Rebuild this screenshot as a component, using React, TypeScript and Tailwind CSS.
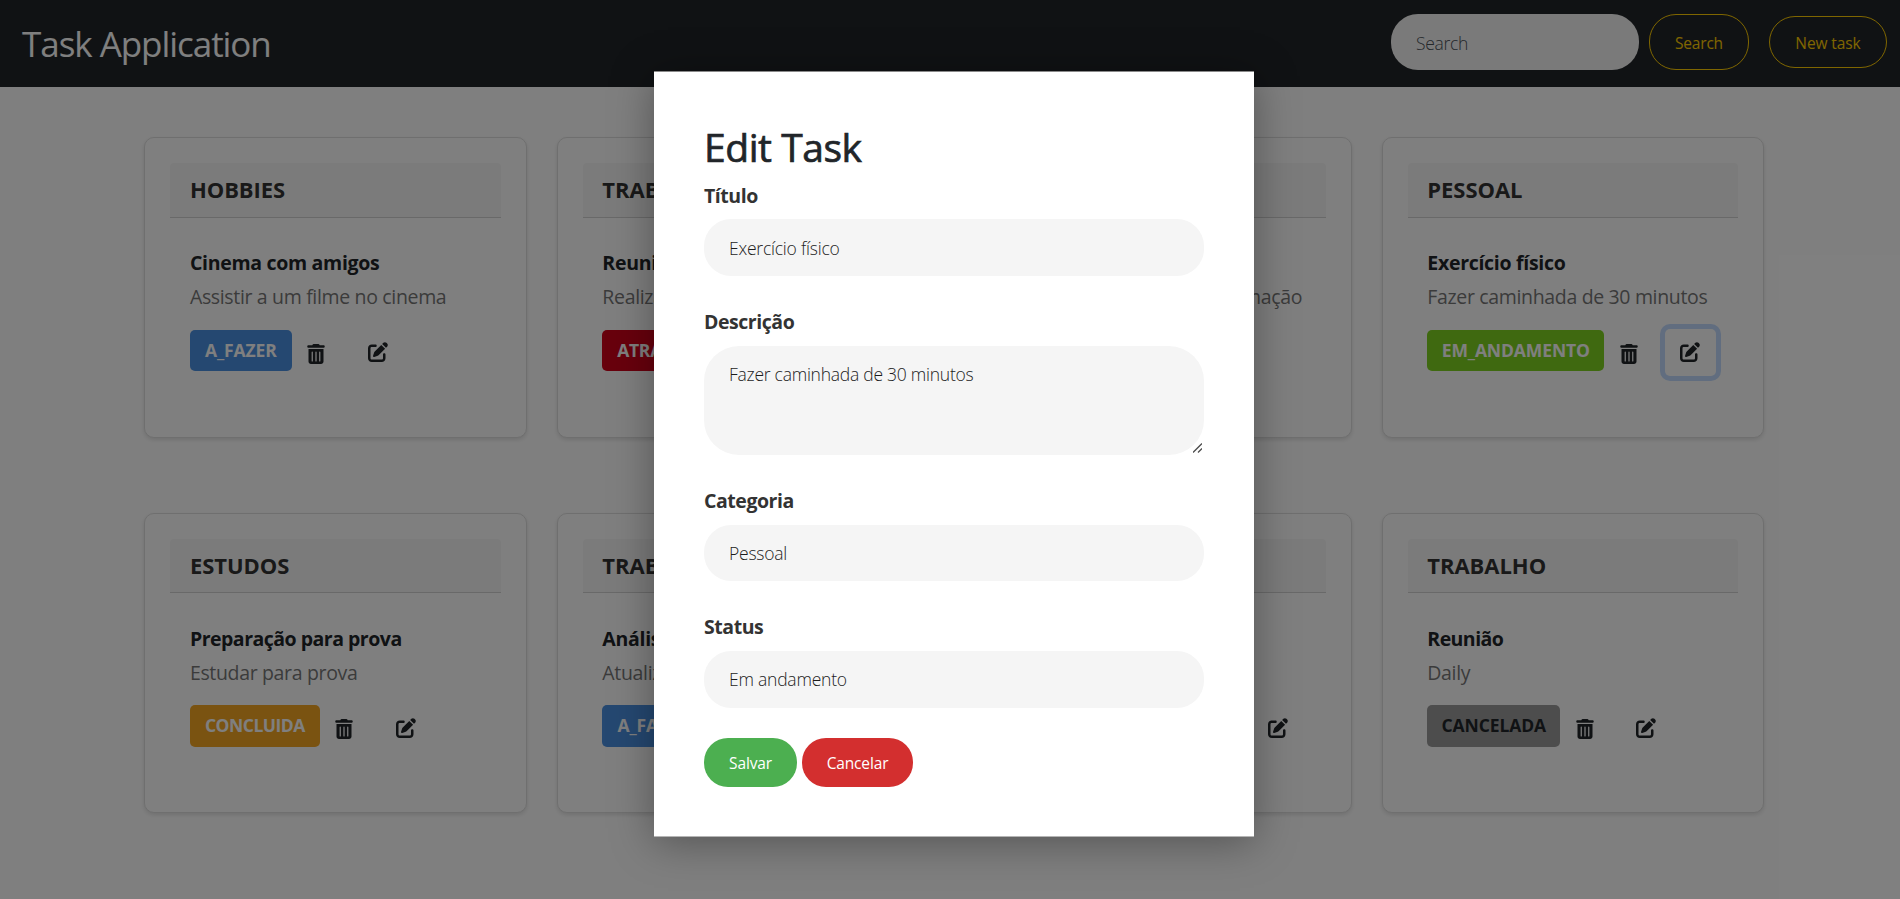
import { FaTrashCan, FaPenToSquare } from "react-icons/fa6";

type Status = "A_FAZER" | "ATRASADA" | "CONCLUIDA" | "EM_ANDAMENTO" | "CANCELADA";

type Task = {
  category: string;
  title: string;
  titleSpacing?: string;
  description: string;
  status: Status;
  focused?: boolean;
};

const badges: Record<Status, string> = {
  A_FAZER: "w-[102px] tracking-[-0.1px] bg-[#4a90e2] text-white",
  ATRASADA: "w-[120px] tracking-[-0.3px] bg-[#d0021b] text-white",
  CONCLUIDA: "w-[130px] tracking-[-0.5px] bg-[#f5a623] text-white",
  EM_ANDAMENTO: "w-[177px] tracking-[-0.1px] bg-[#7ed321] text-white",
  CANCELADA: "w-[133px] tracking-[-0.1px] bg-[#9b9b9b] text-[#212529]",
};

const tasks: Task[] = [
  { category: "HOBBIES", title: "Cinema com amigos", description: "Assistir a um filme no cinema", status: "A_FAZER" },
  { category: "TRABALHO", title: "Reunião de equipe", description: "Realizar reunião semanal", status: "ATRASADA" },
  { category: "ESTUDOS", title: "Curso online", description: "Estudar a lógica de programação", status: "CONCLUIDA" },
  { category: "PESSOAL", title: "Exercício físico", description: "Fazer caminhada de 30 minutos", status: "EM_ANDAMENTO", focused: true },
  { category: "ESTUDOS", title: "Preparação para prova", titleSpacing: "tracking-[-0.5px]", description: "Estudar para prova", status: "CONCLUIDA" },
  { category: "TRABALHO", title: "Análise de dados", description: "Atualizar relatório", status: "A_FAZER" },
  { category: "PESSOAL", title: "Compras", description: "Ir ao mercado", status: "EM_ANDAMENTO" },
  { category: "TRABALHO", title: "Reunião", titleSpacing: "tracking-[-0.55px]", description: "Daily", status: "CANCELADA" },
];

function TaskCard({ task }: { task: Task }) {
  return (
    <article className="h-[300.3px] rounded-[10px] border border-[#dfdfdf] bg-white p-[25px] shadow-[0_2px_4px_rgba(0,0,0,0.12)]">
      <h2 className="h-[54.6px] rounded-t-[4px] border-b border-[#d3d3d3] bg-[#f7f7f7] px-[19.5px] text-[22px] leading-[53px] font-bold tracking-[-0.05px] text-[#333]">
        {task.category}
      </h2>
      <div className="px-[19.5px] pt-[28.4px]">
        <h3 className={`text-[19.5px] leading-[34px] font-bold text-[#212529] ${task.titleSpacing ?? "tracking-[-0.3px]"}`}>{task.title}</h3>
        <p className="text-[19.5px] leading-[34px] tracking-[-0.34px] whitespace-nowrap text-[#777]">{task.description}</p>
        <div className="flex items-center pt-[15.4px]">
          <span className={`rounded-[5px] text-center text-[17.5px] leading-[41.6px] font-bold ${badges[task.status]}`}>{task.status}</span>
          <button className="ml-[14.5px] pt-[6px] text-[#212529]">
            <FaTrashCan size={20} />
          </button>
          <button
            className={`-mb-1 -mt-px ml-[26px] flex h-[47px] w-[51px] items-center justify-center rounded-[5px] text-[#212529] ${task.focused ? "shadow-[0_0_0_5px_#c2dbfe]" : ""}`}
          >
            <FaPenToSquare size={20} />
          </button>
        </div>
      </div>
    </article>
  );
}

function Label({ text }: { text: string }) {
  return <span className="block h-[39.6px] text-[19.5px] leading-[32px] font-bold tracking-[-0.45px] text-[#333]">{text}</span>;
}

function Field({ label, value }: { label: string; value: string }) {
  return (
    <label className="mb-[30px] block">
      <Label text={label} />
      <input
        className="block h-[56.6px] w-full rounded-[27px] bg-[#f5f5f5] px-[25px] text-[17.5px] font-light tracking-[-0.22px] text-[#1c1c1c]"
        defaultValue={value}
      />
    </label>
  );
}

export default function App() {
  return (
    <div className="relative h-[899px] overflow-hidden bg-white font-['Open_Sans','Noto_Sans',sans-serif]">
      <nav className="flex h-[87px] items-center bg-[#212529] pr-[13px] pb-[3px] pl-[22px]">
        <span className="mr-auto pt-[4px] text-[35px] tracking-[-1.05px] text-white">Task Application</span>
        <form className="flex h-14 items-stretch gap-[10px]">
          <input
            className="w-[248px] rounded-[27px] bg-[#f5f5f5] px-[25px] pt-[2px] text-[17.5px] font-light tracking-[-0.3px] placeholder:text-[#495057]"
            placeholder="Search"
          />
          <button type="button" className="w-[100px] rounded-[27px] border border-[#ffcc00] pt-[4px] text-[15.5px] tracking-[-0.2px] text-[#ffcc00]">
            Search
          </button>
        </form>
        <button className="ml-5 h-[52px] w-[118px] rounded-[26px] border border-[#ffcc00] pt-[4px] text-[15.5px] tracking-[-0.1px] text-[#ffcc00]">New task</button>
      </nav>
      <main className="grid grid-cols-4 gap-x-[30.3px] gap-y-[75.3px] pt-[50.3px] pr-[136px] pl-[144.4px]">
        {tasks.map((task, i) => (
          <TaskCard key={i} task={task} />
        ))}
      </main>
      <div className="absolute inset-0 flex items-start bg-black/50 pt-[71px] pl-[654px]">
        <div
          role="dialog"
          className="h-[766px] w-[600px] border-t border-b border-t-[#8a8a8a] border-b-[#b5b5b5] bg-white px-[50px] pt-[49.6px] shadow-[0_5px_40px_rgba(0,0,0,0.35)]"
        >
          <h1 className="h-[58.3px] text-[39px] leading-[50px] font-normal tracking-[-0.45px] text-[#212529] [-webkit-text-stroke:0.7px_#212529]">Edit Task</h1>
          <Field label="Título" value="Exercício físico" />
          <label className="relative mb-[30px] block">
            <Label text="Descrição" />
            <textarea
              className="block h-[109.6px] w-full resize-none rounded-[35px] bg-[#f5f5f5] px-[25px] py-[15px] text-[17.5px] leading-[27px] font-light tracking-[-0.25px] text-[#1c1c1c]"
              defaultValue="Fazer caminhada de 30 minutos"
            />
            <svg className="absolute right-[2px] bottom-[2px]" width="9" height="10" viewBox="0 0 9 10" fill="none" stroke="#4d4d4d" strokeWidth="1.3">
              <path d="M0 9.5 9 0.5M5 9.5 9 5.5" />
            </svg>
          </label>
          <Field label="Categoria" value="Pessoal" />
          <Field label="Status" value="Em andamento" />
          <div className="flex gap-[5px] text-[15.5px] tracking-[-0.15px] text-white">
            <button className="h-[49.5px] w-[93px] rounded-[24px] bg-[#4caf50] pt-[3px]">Salvar</button>
            <button className="h-[49.5px] w-[111px] rounded-[24px] bg-[#d32f2f] pt-[3px]">Cancelar</button>
          </div>
        </div>
      </div>
    </div>
  );
}
